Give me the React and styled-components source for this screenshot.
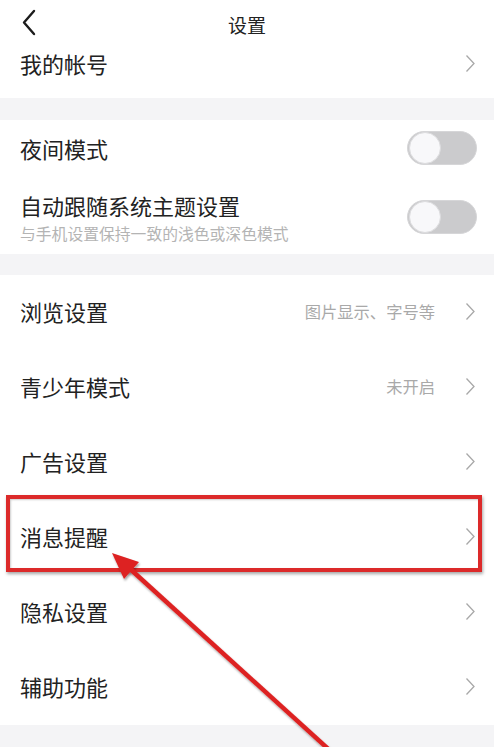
import React from "react";
import styled, { createGlobalStyle } from "styled-components";

const Global = createGlobalStyle`
  html, body { margin: 0; padding: 0; background: #ffffff; }
  body { font-family: "Noto Sans CJK SC", "Noto Sans", sans-serif; color: #222; }
  * { box-sizing: border-box; }
`;

const Page = styled.div`
  position: relative;
  width: 494px;
  height: 747px;
  overflow: hidden;
  background: #f4f4f6;
  display: flex;
  flex-direction: column;
`;

const Header = styled.div`
  height: 44px;
  padding-top: 6px;
  display: flex;
  align-items: center;
  justify-content: center;
  position: relative;
  background: #fff;
`;

const BackButton = styled.span`
  position: absolute;
  left: 20px;
  top: 9px;
  width: 18px;
  height: 28px;
  display: flex;
`;

const Title = styled.div`
  font-size: 19px;
  line-height: 24px;
  color: #222;
`;

const Section = styled.div`
  background: #fff;
  display: flex;
  flex-direction: column;
`;

const Band = styled.div`
  height: ${(p) => p.$h}px;
  background: #f4f4f6;
`;

const Row = styled.div`
  position: relative;
  height: ${(p) => p.$h}px;
  padding: ${(p) => p.$pad || "0"};
  display: flex;
  align-items: ${(p) => p.$align || "center"};
  padding-left: 20px;
  padding-right: 18px;
`;

const Texts = styled.div`
  flex: 1;
  display: flex;
  flex-direction: column;
  gap: 5px;
`;

const Label = styled.div`
  font-size: 22px;
  line-height: 28px;
  color: #222;
`;

const Sub = styled.div`
  font-size: 15.8px;
  line-height: 20px;
  color: #b4b4b4;
`;

const Value = styled.div`
  font-size: 16.3px;
  line-height: 22px;
  color: #a9a9a9;
  margin-right: 29px;
`;

const Toggle = styled.div`
  width: 70px;
  height: 34px;
  border-radius: 17px;
  background: #cbcbcd;
  border: 1px solid #d6d6d8;
  margin-right: -1px;
  display: flex;
  align-items: center;
  padding: 0 1px;
`;

const Knob = styled.div`
  width: 32px;
  height: 32px;
  border-radius: 50%;
  background: #f8f8fa;
  border: 1px solid #dcdcde;
`;

const Highlight = styled.div`
  position: absolute;
  left: 6px;
  right: 12px;
  top: -5px;
  bottom: 3px;
  border: 4px solid #dc2a2a;
  box-shadow: 1px 2px 3px rgba(0, 0, 0, 0.35), inset 1px 1px 2px rgba(0, 0, 0, 0.2);
  pointer-events: none;
`;

const ArrowLayer = styled.svg`
  position: absolute;
  left: 0;
  top: 0;
  width: 494px;
  height: 747px;
  pointer-events: none;
`;

const Chevron = () => (
  <svg width="12" height="19" viewBox="0 0 12 19">
    <path d="M2.5 1.5 L10 9.5 L2.5 17.5" fill="none" stroke="#a8a8a8" strokeWidth="1.3" />
  </svg>
);

const BackIcon = () => (
  <svg width="18" height="28" viewBox="0 0 18 28">
    <path d="M14 2 L4 13.5 L14 25" fill="none" stroke="#1c1c1c" strokeWidth="2.4" strokeLinecap="round" strokeLinejoin="round" />
  </svg>
);

const Switch = () => (
  <Toggle>
    <Knob />
  </Toggle>
);

const navItems = [
  { label: "浏览设置", value: "图片显示、字号等" },
  { label: "青少年模式", value: "未开启" },
  { label: "广告设置" },
  { label: "消息提醒", highlight: true },
  { label: "隐私设置" },
  { label: "辅助功能" },
];

export default function App() {
  return (
    <>
      <Global />
      <Page>
        <Header>
          <BackButton>
            <BackIcon />
          </BackButton>
          <Title>设置</Title>
        </Header>
        <Section>
          <Row $h={54} $pad="0 0 16px 0">
            <Texts>
              <Label>我的帐号</Label>
            </Texts>
            <Chevron />
          </Row>
        </Section>
        <Band $h={22} />
        <Section>
          <Row $h={56}>
            <Texts>
              <Label>夜间模式</Label>
            </Texts>
            <Switch />
          </Row>
          <Row $h={78} $pad="10px 0 6px 0">
            <Texts>
              <Label>自动跟随系统主题设置</Label>
              <Sub>与手机设置保持一致的浅色或深色模式</Sub>
            </Texts>
            <Switch />
          </Row>
        </Section>
        <Band $h={21} />
        <Section>
          {navItems.map((it) => (
            <Row key={it.label} $h={75} $pad="0 0 3px 0">
              <Texts>
                <Label>{it.label}</Label>
              </Texts>
              {it.value && <Value>{it.value}</Value>}
              <Chevron />
              {it.highlight && <Highlight />}
            </Row>
          ))}
        </Section>
        <ArrowLayer viewBox="0 0 494 747">
          <defs>
            <filter id="sh" x="-20%" y="-20%" width="140%" height="140%">
              <feDropShadow dx="1" dy="2" stdDeviation="1.2" floodColor="#000" floodOpacity="0.35" />
            </filter>
          </defs>
          <g filter="url(#sh)">
            <line x1="128" y1="567" x2="336" y2="756" stroke="#dd2424" strokeWidth="4.5" />
            <polygon points="112,553 139,562 124,579" fill="#dd2424" />
          </g>
        </ArrowLayer>
      </Page>
    </>
  );
}
